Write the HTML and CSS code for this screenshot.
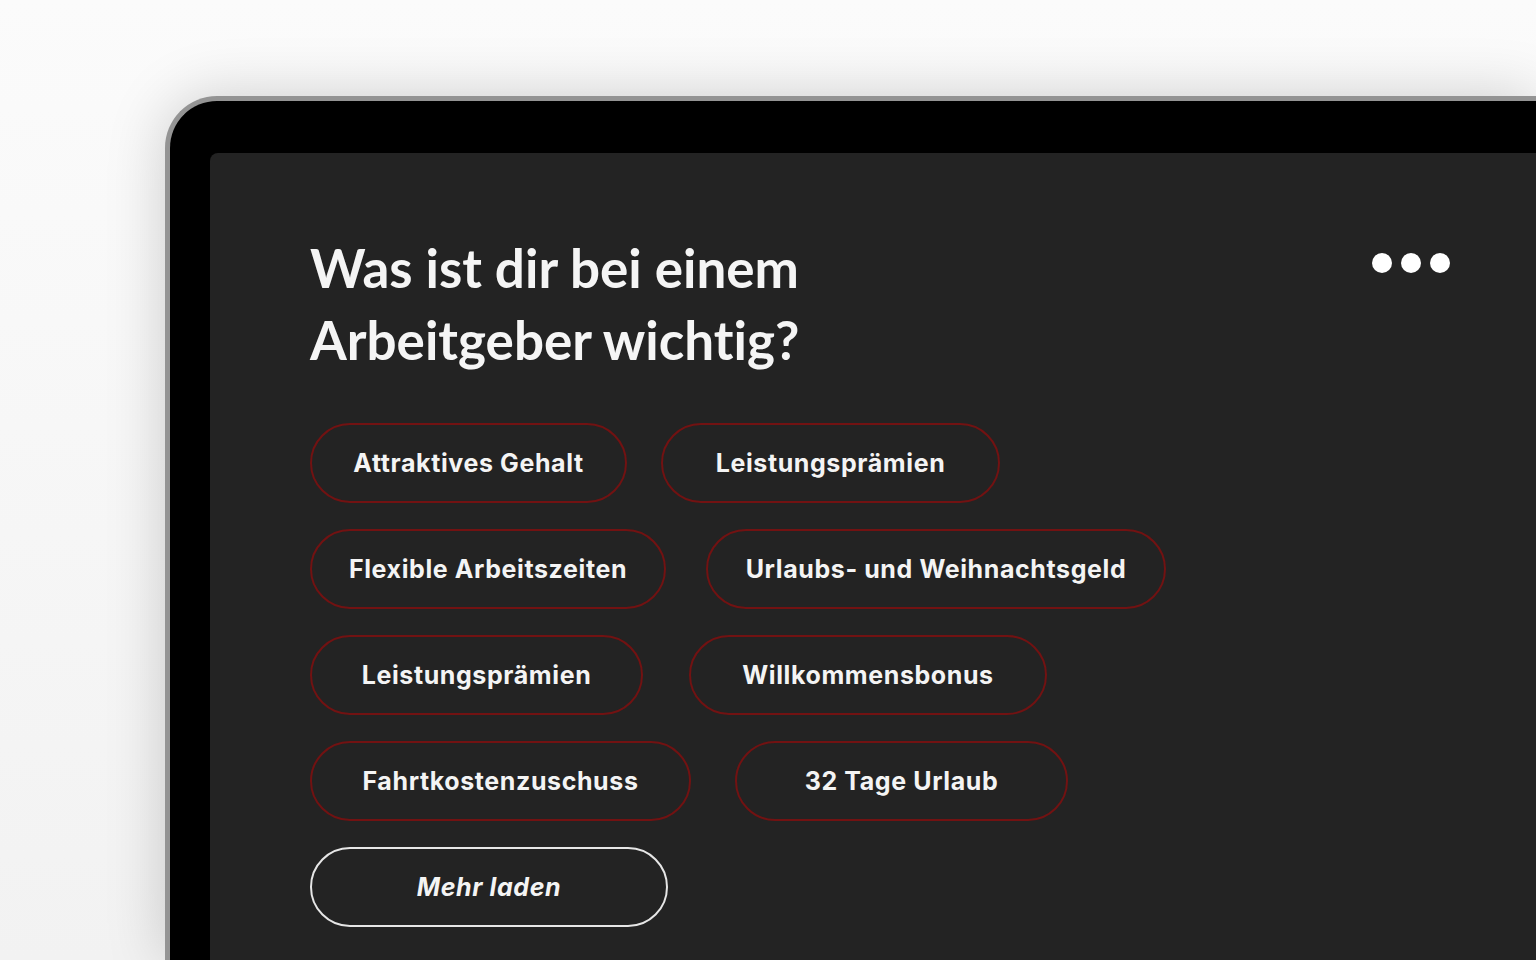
FILE: index.html
```html
<!DOCTYPE html>
<html lang="de">
<head>
    <meta charset="UTF-8">
    <meta name="viewport" content="width=device-width, initial-scale=1.0">
    <title>Was ist dir wichtig?</title>
    <link rel="stylesheet" href="styles.css">
</head>
<body>
    <div class="device">
        <div class="screen">
            <div class="header">
                <h1>Was ist dir bei einem<br>Arbeitgeber wichtig?</h1>
                <div class="dots">
                    <span></span><span></span><span></span>
                </div>
            </div>

            <div class="options">
                <div class="row row-1">
                    <button class="pill">Attraktives Gehalt</button>
                    <button class="pill">Leistungsprämien</button>
                </div>
                <div class="row row-2">
                    <button class="pill">Flexible Arbeitszeiten</button>
                    <button class="pill">Urlaubs- und Weihnachtsgeld</button>
                </div>
                <div class="row row-3">
                    <button class="pill">Leistungsprämien</button>
                    <button class="pill">Willkommensbonus</button>
                </div>
                <div class="row row-4">
                    <button class="pill">Fahrtkostenzuschuss</button>
                    <button class="pill">32 Tage Urlaub</button>
                </div>
                <div class="row">
                    <button class="pill more">Mehr laden</button>
                </div>
            </div>
        </div>
    </div>
</body>
</html>
```

FILE: styles.css
```css
html, body {
    margin: 0;
    padding: 0;
    height: 100%;
}
body {
    background: linear-gradient(180deg, #fbfbfb 0%, #f2f2f2 100%);
    overflow: hidden;
    padding: 96px 0 0 165px;
    box-sizing: border-box;
}
.device {
    width: 100%;
    height: 100%;
    background-color: #000;
    border: 5px solid #949494;
    border-right: none;
    border-bottom: none;
    border-radius: 52px 0 0 0;
    padding: 52px 0 0 40px;
    box-sizing: border-box;
    box-shadow: 0 0 60px rgba(0, 0, 0, 0.18);
}
.screen {
    height: 100%;
    background-color: #232323;
    border-radius: 8px 0 0 0;
    padding: 79px 0 0 100px;
    box-sizing: border-box;
    overflow: hidden;
}
.header {
    width: 1140px;
    display: flex;
    justify-content: space-between;
    align-items: flex-start;
}
h1 {
    margin: 0;
    font-family: Lato, "Liberation Sans", sans-serif;
    font-weight: 700;
    font-size: 53px;
    line-height: 72px;
    color: #f5f5f5;
    font-variant-ligatures: none;
}
.dots {
    display: flex;
    gap: 9px;
    margin-top: 21px;
}
.dots span {
    width: 20px;
    height: 20px;
    border-radius: 50%;
    background-color: #fff;
}
.options {
    margin-top: 47px;
    display: flex;
    flex-direction: column;
    gap: 26px;
}
.row {
    display: flex;
}
.pill {
    height: 80px;
    border: 2px solid #721212;
    border-radius: 40px;
    background: transparent;
    color: #f4f4f4;
    font-family: Inter, "Noto Sans", sans-serif;
    font-weight: 700;
    font-size: 25px;
    letter-spacing: 0.6px;
    text-align: center;
    padding: 0;
    box-sizing: border-box;
    cursor: pointer;
}
.row-1 { gap: 34px; }
.row-1 .pill:nth-child(1) { width: 317px; }
.row-1 .pill:nth-child(2) { width: 339px; }
.row-2 { gap: 40px; }
.row-2 .pill:nth-child(1) { width: 356px; }
.row-2 .pill:nth-child(2) { width: 460px; }
.row-3 { gap: 46px; }
.row-3 .pill:nth-child(1) { width: 333px; }
.row-3 .pill:nth-child(2) { width: 358px; }
.row-4 { gap: 44px; }
.row-4 .pill:nth-child(1) { width: 381px; }
.row-4 .pill:nth-child(2) { width: 333px; }
.pill.more {
    width: 358px;
    border-color: #e6e6e6;
    font-style: italic;
}
```
